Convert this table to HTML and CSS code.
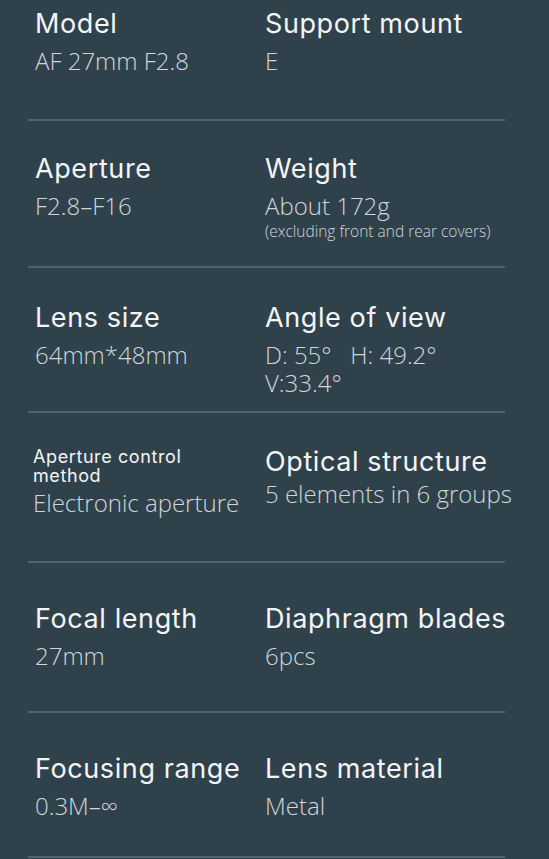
FILE: index.html
```html
<!DOCTYPE html>
<html lang="en">
<head>
<meta charset="utf-8">
<title>Specifications</title>
<link rel="stylesheet" href="styles.css">
</head>
<body>
<main class="specs">
  <section class="row r1">
    <div class="cell"><h3 class="label">Model</h3><p class="value">AF 27mm F2.8</p></div>
    <div class="cell"><h3 class="label">Support mount</h3><p class="value">E</p></div>
  </section>
  <section class="row r2">
    <div class="cell"><h3 class="label">Aperture</h3><p class="value">F2.8–F16</p></div>
    <div class="cell"><h3 class="label">Weight</h3><p class="value">About 172g</p><p class="note">(excluding front and rear covers)</p></div>
  </section>
  <section class="row r3">
    <div class="cell"><h3 class="label">Lens size</h3><p class="value">64mm*48mm</p></div>
    <div class="cell"><h3 class="label">Angle of view</h3><p class="value">D: 55°&nbsp;&nbsp;&nbsp;H: 49.2°</p><p class="value line2">V:33.4°</p></div>
  </section>
  <section class="row r4">
    <div class="cell shift"><h3 class="label small">Aperture control<br>method</h3><p class="value after-small">Electronic aperture</p></div>
    <div class="cell"><h3 class="label">Optical structure</h3><p class="value tight">5 elements in 6 groups</p></div>
  </section>
  <section class="row r5">
    <div class="cell"><h3 class="label">Focal length</h3><p class="value">27mm</p></div>
    <div class="cell"><h3 class="label">Diaphragm blades</h3><p class="value">6pcs</p></div>
  </section>
  <section class="row r6">
    <div class="cell"><h3 class="label">Focusing range</h3><p class="value">0.3M–∞</p></div>
    <div class="cell"><h3 class="label">Lens material</h3><p class="value">Metal</p></div>
  </section>
</main>
</body>
</html>
```
FILE: styles.css
```css
html, body {
  margin: 0;
  padding: 0;
  background: #2f424c;
}
body {
  width: 549px;
  height: 859px;
  overflow: hidden;
  font-family: "Inter", "Noto Sans", sans-serif;
  color: #f4f5f6;
}
.specs {
  display: flex;
  flex-direction: column;
  padding: 0 44px 0 28px;
}
.row {
  display: grid;
  grid-template-columns: 230px 1fr;
  padding-left: 7px;
  border-bottom: 2px solid #53636c;
  box-sizing: border-box;
}
.r1 { height: 121px; padding-top: 6px; }
.r2 { height: 147px; padding-top: 30px; }
.r3 { height: 145px; padding-top: 32px; }
.r4 { height: 150px; padding-top: 31px; }
.r5 { height: 150px; padding-top: 38px; }
.r6 { height: 145px; padding-top: 38px; }
.cell {
  display: flex;
  flex-direction: column;
  min-width: 0;
}
.cell.shift { margin-left: -2px; }
.label {
  margin: 0;
  font-size: 27px;
  font-weight: 400;
  line-height: 36px;
  letter-spacing: 0.6px;
  white-space: nowrap;
}
.label.small {
  font-size: 18px;
  line-height: 19px;
  margin-top: 3px;
  letter-spacing: 0.6px;
}
.value {
  margin: 5px 0 0;
  font-family: "Open Sans", "Inter", sans-serif;
  font-size: 24px;
  font-weight: 300;
  line-height: 28px;
  color: #d0d6d9;
  white-space: nowrap;
}
.value.line2 { margin-top: 0; }
.value.tight { margin-top: 0; }
.value.after-small { margin-top: 4px; }
.note {
  margin: 2px 0 0;
  font-family: "Open Sans", "Inter", sans-serif;
  font-size: 15.5px;
  font-weight: 300;
  line-height: 18px;
  color: #d0d6d9;
  white-space: nowrap;
}
```
